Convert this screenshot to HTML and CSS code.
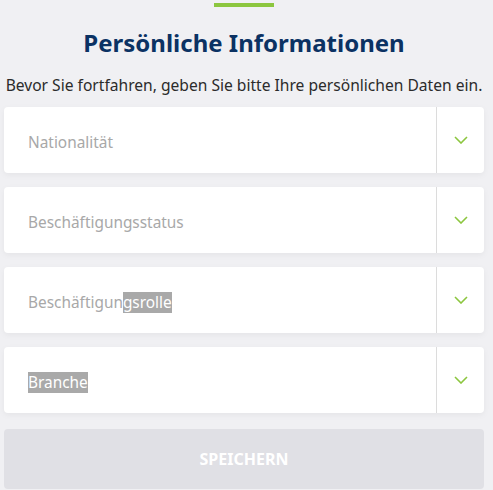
FILE: index.html
```html
<!DOCTYPE html>
<html lang="de">
<head>
    <meta charset="UTF-8">
    <meta name="viewport" content="width=device-width, initial-scale=1.0">
    <title>Persönliche Informationen</title>
    <link rel="stylesheet" href="styles.css">
</head>
<body>
    <div class="container">
        <div class="accent"></div>
        <h1>Persönliche Informationen</h1>
        <p class="intro">Bevor Sie fortfahren, geben Sie bitte Ihre persönlichen Daten ein.</p>

        <div class="field">
            <span class="placeholder">Nationalität</span>
            <span class="toggle">
                <svg width="14" height="8" viewBox="0 0 14 8"><path d="M1 1l6 6 6-6" fill="none" stroke="#8cc63f" stroke-width="1.6"/></svg>
            </span>
        </div>
        <div class="field">
            <span class="placeholder">Beschäftigungsstatus</span>
            <span class="toggle">
                <svg width="14" height="8" viewBox="0 0 14 8"><path d="M1 1l6 6 6-6" fill="none" stroke="#8cc63f" stroke-width="1.6"/></svg>
            </span>
        </div>
        <div class="field">
            <span class="placeholder">Beschäftigun<span class="marked">gsrolle</span></span>
            <span class="toggle">
                <svg width="14" height="8" viewBox="0 0 14 8"><path d="M1 1l6 6 6-6" fill="none" stroke="#8cc63f" stroke-width="1.6"/></svg>
            </span>
        </div>
        <div class="field">
            <span class="placeholder"><span class="marked">Branche</span></span>
            <span class="toggle">
                <svg width="14" height="8" viewBox="0 0 14 8"><path d="M1 1l6 6 6-6" fill="none" stroke="#8cc63f" stroke-width="1.6"/></svg>
            </span>
        </div>

        <button class="save" disabled>SPEICHERN</button>
    </div>
</body>
</html>
```

FILE: styles.css
```css
* {
  box-sizing: border-box;
}
body {
    font-family: "Noto Sans", "Open Sans", sans-serif;
    background-color: #f0f0f3;
    color: #333;
    margin: 0;
    padding: 3px 9px 0 4px;
}

.container {
    display: flex;
    flex-direction: column;
}

.accent {
    width: 60px;
    height: 4px;
    background: #8cc63f;
    align-self: center;
}

h1 {
    margin: 21px 0 0;
    text-align: center;
    font-size: 24px;
    line-height: 30px;
    font-weight: bold;
    color: #0b3263;
}

.intro {
    margin: 16px 0 11px;
    font-size: 15.6px;
    line-height: 22px;
    color: #2b2b2b;
    text-align: center;
    white-space: nowrap;
}

.field {
    display: flex;
    align-items: stretch;
    height: 66px;
    margin-bottom: 14px;
    background: #fff;
    border-radius: 4px;
    box-shadow: 0 2px 6px rgba(0, 0, 0, 0.05);
}

.placeholder {
    flex: 1;
    display: flex;
    align-items: center;
    padding: 4px 0 0 24px;
    font-size: 15.4px;
    color: #a8a8a8;
}

.marked {
    background: #a9a9a9;
    color: #fff;
}

.toggle {
    width: 48px;
    display: flex;
    align-items: center;
    justify-content: center;
    border-left: 1px solid #dcdcdc;
}

.save {
    height: 60px;
    margin-top: 2px;
    border: none;
    border-radius: 4px;
    background: #e0e0e5;
    color: #fff;
    font-family: inherit;
    font-size: 16px;
    font-weight: bold;
}
```
